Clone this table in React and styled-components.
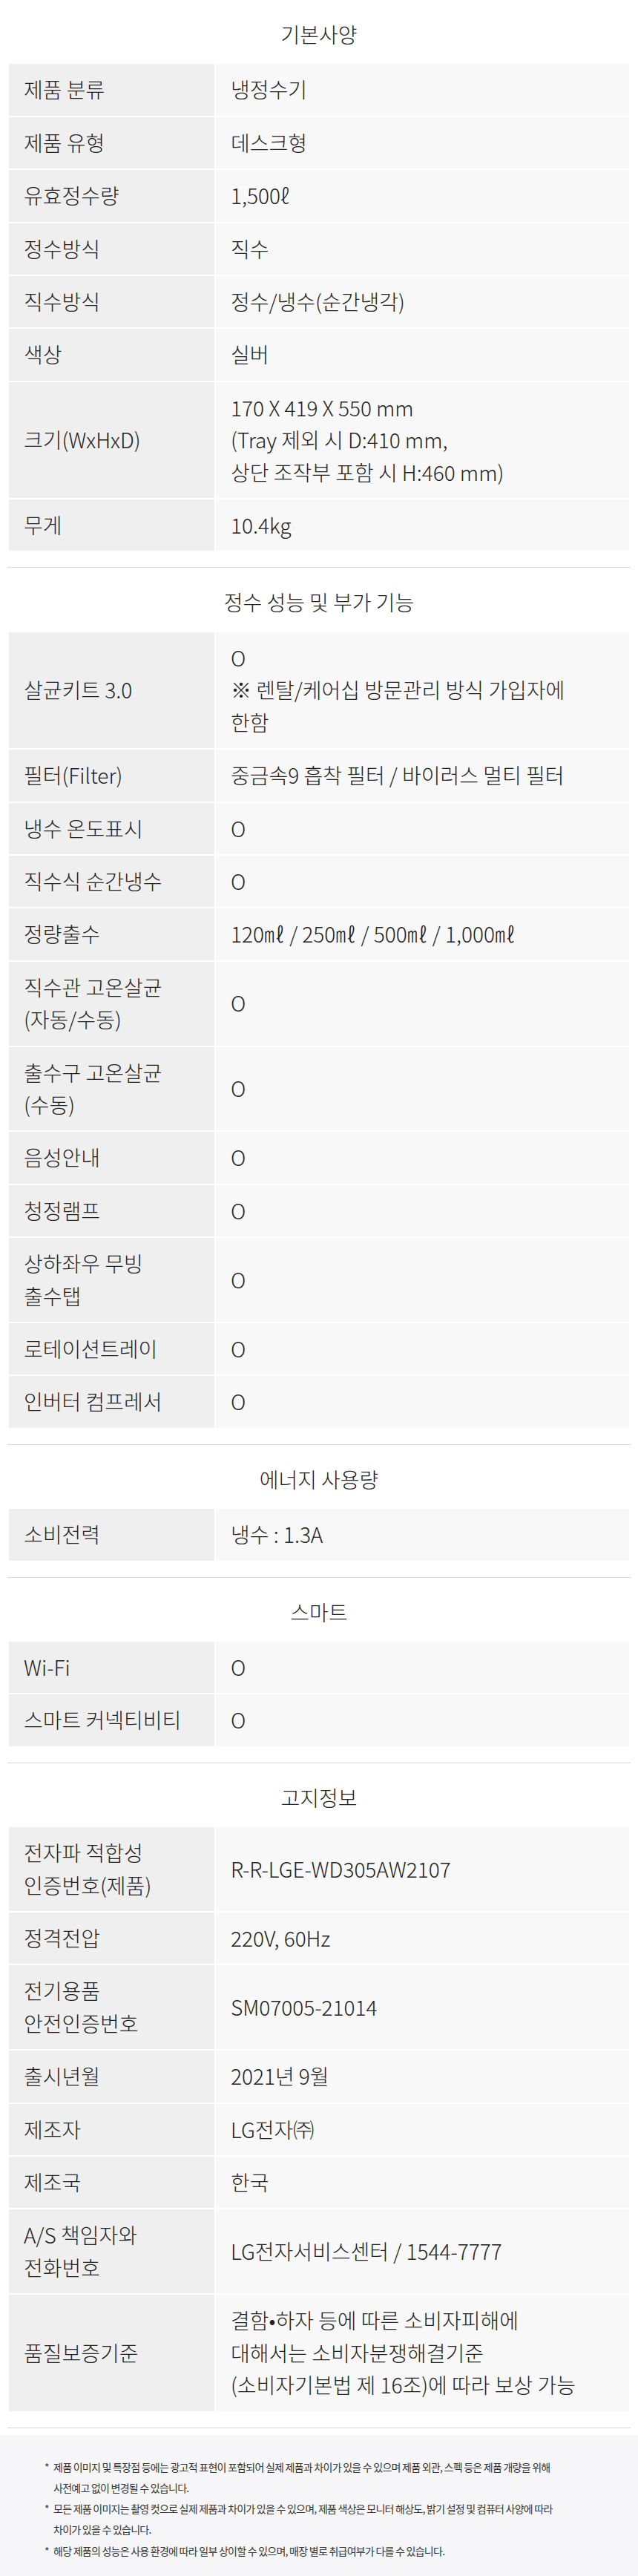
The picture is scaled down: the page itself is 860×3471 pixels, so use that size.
import React from "react";
import styled, { createGlobalStyle } from "styled-components";

const GlobalStyle = createGlobalStyle`
  html, body {
    margin: 0;
    padding: 0;
    background: #ffffff;
  }
  body {
    font-family: "Noto Sans CJK KR", "Noto Sans", sans-serif;
    font-weight: 300;
    color: #222222;
  }
`;

const Page = styled.div`
  width: 860px;
`;

const Main = styled.main`
  padding: 0 10px;
`;

const Section = styled.section`
  display: flex;
  flex-direction: column;
`;

const SectionTitle = styled.h3`
  margin: 0;
  padding: 25px 0 16px;
  font-size: 28px;
  line-height: 43.4px;
  font-weight: 300;
  text-align: center;
  color: #222222;
`;

const SpecTable = styled.div`
  display: grid;
  grid-template-columns: 277px 1fr;
  gap: 2px;
  padding: 2px;
  background: #ffffff;
`;

const Cell = styled.div`
  display: flex;
  align-items: center;
  padding: 13px 20px;
  font-size: 28px;
  line-height: 43.4px;
  font-weight: 300;
  color: #222222;
  background: ${(p) => (p.$label ? "#efefef" : "#f8f8f8")};
`;

const Divider = styled.hr`
  margin: 20px 0 0;
  border: 0;
  border-top: 1px solid #d6d6d6;
  height: 0;
`;

const Notice = styled.div`
  margin-top: 9px;
  background: #f6f6f8;
  padding: 29px 60px 29px;
`;

const Note = styled.div`
  display: flex;
  font-size: 14px;
  line-height: 28.3px;
  letter-spacing: -0.75px;
  font-weight: 400;
  color: #333333;
  white-space: nowrap;
`;

const Bullet = styled.span`
  flex: 0 0 12px;
`;

const sections = [
  {
    title: "기본사양",
    rows: [
      [["제품 분류"], ["냉정수기"]],
      [["제품 유형"], ["데스크형"]],
      [["유효정수량"], ["1,500ℓ"]],
      [["정수방식"], ["직수"]],
      [["직수방식"], ["정수/냉수(순간냉각)"]],
      [["색상"], ["실버"]],
      [
        ["크기(WxHxD)"],
        ["170 X 419 X 550 mm", "(Tray 제외 시 D:410 mm,", "상단 조작부 포함 시 H:460 mm)"],
      ],
      [["무게"], ["10.4kg"]],
    ],
  },
  {
    title: "정수 성능 및 부가 기능",
    rows: [
      [["살균키트 3.0"], ["O", "※ 렌탈/케어십 방문관리 방식 가입자에", "한함"]],
      [["필터(Filter)"], ["중금속9 흡착 필터 / 바이러스 멀티 필터"]],
      [["냉수 온도표시"], ["O"]],
      [["직수식 순간냉수"], ["O"]],
      [["정량출수"], ["120㎖ / 250㎖ / 500㎖ / 1,000㎖"]],
      [["직수관 고온살균", "(자동/수동)"], ["O"]],
      [["출수구 고온살균", "(수동)"], ["O"]],
      [["음성안내"], ["O"]],
      [["청정램프"], ["O"]],
      [["상하좌우 무빙", "출수탭"], ["O"]],
      [["로테이션트레이"], ["O"]],
      [["인버터 컴프레서"], ["O"]],
    ],
  },
  {
    title: "에너지 사용량",
    rows: [[["소비전력"], ["냉수 : 1.3A"]]],
  },
  {
    title: "스마트",
    rows: [
      [["Wi-Fi"], ["O"]],
      [["스마트 커넥티비티"], ["O"]],
    ],
  },
  {
    title: "고지정보",
    rows: [
      [["전자파 적합성", "인증번호(제품)"], ["R-R-LGE-WD305AW2107"]],
      [["정격전압"], ["220V, 60Hz"]],
      [["전기용품", "안전인증번호"], ["SM07005-21014"]],
      [["출시년월"], ["2021년 9월"]],
      [["제조자"], ["LG전자㈜"]],
      [["제조국"], ["한국"]],
      [["A/S 책임자와", "전화번호"], ["LG전자서비스센터 / 1544-7777"]],
      [
        ["품질보증기준"],
        ["결함•하자 등에 따른 소비자피해에", "대해서는 소비자분쟁해결기준", "(소비자기본법 제 16조)에 따라 보상 가능"],
      ],
    ],
  },
];

const notes = [
  [
    "제품 이미지 및 특장점 등에는 광고적 표현이 포함되어 실제 제품과 차이가 있을 수 있으며 제품 외관, 스펙 등은 제품 개량을 위해",
    "사전예고 없이 변경될 수 있습니다.",
  ],
  [
    "모든 제품 이미지는 촬영 컷으로 실제 제품과 차이가 있을 수 있으며, 제품 색상은 모니터 해상도, 밝기 설정 및 컴퓨터 사양에 따라",
    "차이가 있을 수 있습니다.",
  ],
  ["해당 제품의 성능은 사용 환경에 따라 일부 상이할 수 있으며, 매장 별로 취급여부가 다를 수 있습니다."],
];

function Lines({ lines }) {
  return (
    <div>
      {lines.map((l, i) => (
        <React.Fragment key={i}>
          {i > 0 && <br />}
          {l}
        </React.Fragment>
      ))}
    </div>
  );
}

export default function App() {
  return (
    <Page>
      <GlobalStyle />
      <Main>
        {sections.map((s) => (
          <Section key={s.title}>
            <SectionTitle>{s.title}</SectionTitle>
            <SpecTable>
              {s.rows.map(([label, value], i) => (
                <React.Fragment key={i}>
                  <Cell $label>
                    <Lines lines={label} />
                  </Cell>
                  <Cell>
                    <Lines lines={value} />
                  </Cell>
                </React.Fragment>
              ))}
            </SpecTable>
            <Divider />
          </Section>
        ))}
      </Main>
      <Notice>
        {notes.map((n, i) => (
          <Note key={i}>
            <Bullet>*</Bullet>
            <Lines lines={n} />
          </Note>
        ))}
      </Notice>
    </Page>
  );
}
